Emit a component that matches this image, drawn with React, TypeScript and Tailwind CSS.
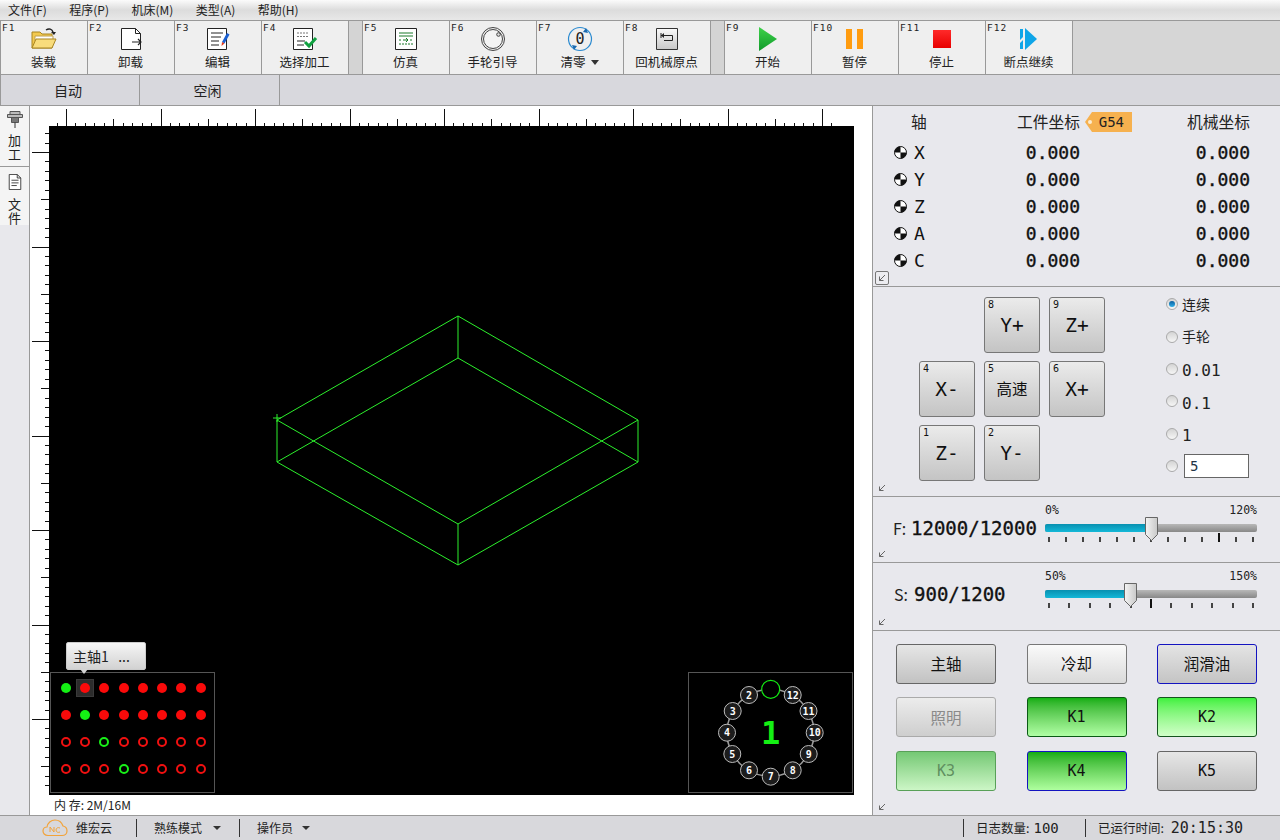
import type { ReactNode } from 'react'

const sans = "font-['Noto_Sans_CJK_SC','Liberation_Sans',sans-serif]"
const mono = "font-['DejaVu_Sans_Mono','Noto_Sans_CJK_SC',monospace]"
const heavy = '[-webkit-text-stroke:0.35px_#111]'

const menus = ['文件(F)', '程序(P)', '机床(M)', '类型(A)', '帮助(H)']

function FolderIcon() {
  return (
    <svg width="26" height="24" viewBox="0 0 26 24">
      <path d="M1 21V5h8l2 2h10v14z" fill="#f3c94f" stroke="#a88420" />
      <path d="M4 14V9h18v5z" fill="#fff" stroke="#bfa050" />
      <path d="M1 21l4-9h20l-4 9z" fill="#f8dc7c" stroke="#a88420" />
      <path d="M15 3c3-2 6-1 7 2" fill="none" stroke="#222" strokeWidth="1.5" />
      <path d="M20 5h5l-2 3z" fill="#222" />
    </svg>
  )
}

function UnloadIcon() {
  return (
    <svg width="22" height="24" viewBox="0 0 22 24" fill="none" stroke="#222">
      <path d="M1.500 1.500h14l5 5v16h-19z" fill="#fff" />
      <path d="M15.500 1.500v5h5" />
      <path d="M12 15h9M18 12l3 3-3 3" strokeWidth="1.200" />
    </svg>
  )
}

function EditIcon() {
  return (
    <svg width="24" height="24" viewBox="0 0 24 24" fill="none">
      <path d="M1.500 1.500h19v21h-19z" fill="#fff" stroke="#222" />
      <path d="M5 6h12M5 10h10M5 14h8M5 18h8" stroke="#222" />
      <path d="M16 15l5-9 2.500 1.500-5 9z" fill="#1a5fd0" />
      <path d="M16 15l2.500 1.500-3 2.500z" fill="#e43a1c" />
    </svg>
  )
}

function SelectIcon() {
  return (
    <svg width="26" height="24" viewBox="0 0 26 24" fill="none">
      <path d="M1.500 1.500h19v21h-19z" fill="#fff" stroke="#222" />
      <path d="M5 6h12M5 9.500h12" stroke="#777" strokeDasharray="2 1" />
      <path d="M5 14h8M5 18h7" stroke="#222" />
      <path d="M13 15l4 4 7-8" stroke="#10a040" strokeWidth="3" />
    </svg>
  )
}

function SimIcon() {
  return (
    <svg width="22" height="24" viewBox="0 0 22 24" fill="none">
      <path d="M.500 1.500h21v21H.500z" fill="#fff" stroke="#222" />
      <path d="M4 6h14M4 9h14" stroke="#1a7a2a" />
      <path d="M4 13h3M15 13h3M4 17h14" stroke="#1a7a2a" strokeDasharray="2 1" />
      <path d="M8 13h5M11 11l2 2-2 2" stroke="#1a7a2a" />
    </svg>
  )
}

function WheelIcon() {
  return (
    <svg width="26" height="26" viewBox="0 0 26 26" fill="none" stroke="#444">
      <circle cx="13" cy="13" r="11.500" />
      <circle cx="13" cy="13" r="9.500" fill="#f4f4f4" />
      <circle cx="18.500" cy="8.500" r="1.800" fill="#ddd" />
    </svg>
  )
}

function ZeroIcon() {
  return (
    <svg width="26" height="26" viewBox="0 0 26 26" fill="none">
      <circle cx="13" cy="13" r="11.500" stroke="#2a8ad0" strokeWidth="1.200" />
      <path d="M19 2l2 5-5-1zM7 24l-2-5 5 1z" fill="#1a6ab0" />
      <text x="13" y="18" textAnchor="middle" fontSize="15" fontFamily="DejaVu Sans Mono" fill="#222">
        0
      </text>
    </svg>
  )
}

function HomeIcon() {
  return (
    <svg width="24" height="24" viewBox="0 0 24 24" fill="none">
      <defs>
        <linearGradient id="homeFill" x1="0" y1="0" x2="0" y2="1">
          <stop offset="0" stopColor="#fafafa" />
          <stop offset="1" stopColor="#c8c8c8" />
        </linearGradient>
      </defs>
      <path d="M1.500 1.500h21v21h-21z" fill="url(#homeFill)" stroke="#333" />
      <path d="M6 6v5M6 8.500h11.500v5H9" stroke="#222" />
      <path d="M6 8.500l3-2.500v5z" fill="#222" />
    </svg>
  )
}

function PlayIcon() {
  return (
    <svg width="20" height="24" viewBox="0 0 20 24">
      <defs>
        <linearGradient id="playFill" x1="0" y1="0" x2="0" y2="1">
          <stop offset="0" stopColor="#3ed24a" />
          <stop offset="1" stopColor="#109a2a" />
        </linearGradient>
      </defs>
      <path d="M1 0l18 12L1 24z" fill="url(#playFill)" />
    </svg>
  )
}

function PauseIcon() {
  return (
    <svg width="18" height="22" viewBox="0 0 18 22">
      <rect x="0" y="1" width="6" height="20" fill="#ff9c10" />
      <rect x="11" y="1" width="6" height="20" fill="#ff9c10" />
    </svg>
  )
}

function StopIcon() {
  return (
    <svg width="18" height="18" viewBox="0 0 18 18">
      <defs>
        <linearGradient id="stopFill" x1="0" y1="0" x2="0" y2="1">
          <stop offset="0" stopColor="#ff2a2a" />
          <stop offset="1" stopColor="#e80000" />
        </linearGradient>
      </defs>
      <rect width="18" height="18" fill="url(#stopFill)" />
    </svg>
  )
}

function ResumeIcon() {
  return (
    <svg width="18" height="22" viewBox="0 0 18 22">
      <path d="M0 1h3v8l-3 3zM0 15l3-3v9H0z" fill="#0ea5e8" />
      <path d="M5 0l12 11L5 22z" fill="#0ea5e8" />
    </svg>
  )
}

const groupA = [
  { key: 'F1', label: '装载', icon: <FolderIcon /> },
  { key: 'F2', label: '卸载', icon: <UnloadIcon /> },
  { key: 'F3', label: '编辑', icon: <EditIcon /> },
  { key: 'F4', label: '选择加工', icon: <SelectIcon /> },
]
const groupB = [
  { key: 'F5', label: '仿真', icon: <SimIcon /> },
  { key: 'F6', label: '手轮引导', icon: <WheelIcon /> },
  { key: 'F7', label: '清零', icon: <ZeroIcon />, caret: true },
  { key: 'F8', label: '回机械原点', icon: <HomeIcon /> },
]
const groupC = [
  { key: 'F9', label: '开始', icon: <PlayIcon /> },
  { key: 'F10', label: '暂停', icon: <PauseIcon /> },
  { key: 'F11', label: '停止', icon: <StopIcon /> },
  { key: 'F12', label: '断点继续', icon: <ResumeIcon /> },
]

type ToolItem = { key: string; label: string; icon: ReactNode; caret?: boolean }

function ToolButton({ item }: { item: ToolItem }) {
  return (
    <div className="relative flex h-full w-[87px] shrink-0 flex-col items-center border-r border-[#999] bg-[#efefef] pr-[1px]">
      <span className={`absolute left-[1px] top-[1px] text-[9.500px] leading-[11px] tracking-[1px] text-[#222] ${mono}`}>{item.key}</span>
      <div className="flex h-[34px] items-center pt-[2px]">{item.icon}</div>
      <div className="-mt-[1px] flex h-[17px] items-center gap-[5px] text-[12.500px] text-[#222]">
        {item.label}
        {item.caret && <span className="h-0 w-0 border-x-[4px] border-t-[5px] border-x-transparent border-t-[#333]" />}
      </div>
    </div>
  )
}

function Grip() {
  return <div className="h-full w-[14px] shrink-0 border-r border-[#999] bg-[#d4d4d4]" />
}

function TopRuler() {
  const ticks = Array.from({ length: 84 }, (_, i) => i)
  return (
    <svg width="825" height="20" className="block" shapeRendering="crispEdges">
      {ticks.map((i) => {
        const x = 36 - 9.45 * 2 + 9.45 * i
        if (x > 822 || x < 19) return null
        const step = (i - 2 + 100) % 10
        const top = step === 0 ? 3 : step === 5 ? 13 : 17
        return <line key={i} x1={Math.round(x)} x2={Math.round(x)} y1={top} y2={20} stroke="#111" />
      })}
    </svg>
  )
}

function LeftRuler() {
  const ticks = Array.from({ length: 72 }, (_, i) => i)
  return (
    <svg width="19" height="669" className="block" shapeRendering="crispEdges">
      {ticks.map((i) => {
        const y = 26 - 9.45 * 2 + 9.45 * i
        if (y > 668 || y < 0) return null
        const step = (i - 2 + 100) % 10
        const left = step === 0 ? 2 : step === 5 ? 11 : 15
        return <line key={i} x1={left} x2={19} y1={Math.round(y)} y2={Math.round(y)} stroke="#111" />
      })}
    </svg>
  )
}

const ioRows = [
  { ring: false, green: 0 },
  { ring: false, green: 1 },
  { ring: true, green: 2 },
  { ring: true, green: 3 },
]

function IoPanel() {
  return (
    <div className="absolute bottom-[2px] left-[1px] h-[121px] w-[165px] border border-[#555] bg-black pl-[5px] pt-[1px]">
      <div className="grid grid-cols-[repeat(8,19.3px)] auto-rows-[27px]">
        {ioRows.map((row, r) =>
          Array.from({ length: 8 }, (_, c) => {
            const color = c === row.green ? 'green' : 'red'
            return (
              <div key={`${r}-${c}`} className="flex items-center justify-center">
                <div className={r === 0 && c === 1 ? 'flex h-[18px] w-[18px] items-center justify-center border border-[#3a3a3a] bg-[#2c2c2c]' : ''}>
                  {row.ring ? (
                    <div className={`h-[10px] w-[10px] rounded-full border-2 ${color === 'green' ? 'border-[#18f018]' : 'border-[#f01010]'}`} />
                  ) : (
                    <div className={`h-[10px] w-[10px] rounded-full ${color === 'green' ? 'bg-[#14f014]' : 'bg-[#fa0a0a]'}`} />
                  )}
                </div>
              </div>
            )
          }),
        )}
      </div>
    </div>
  )
}

const turret: [string, number, number][] = [
  ['12', 104.7, 23],
  ['11', 120.5, 39],
  ['10', 126.7, 60.7],
  ['9', 120.7, 82],
  ['8', 104.7, 98.3],
  ['7', 82.7, 104.7],
  ['6', 61, 98.3],
  ['5', 44.3, 82],
  ['4', 39, 60.7],
  ['3', 44.7, 39],
  ['2', 61, 23],
]

function TurretPanel() {
  return (
    <div className="absolute bottom-[2px] right-[1px] h-[121px] w-[165px] border border-[#555] bg-black">
      <svg width="163" height="119" className="block">
        <g transform="translate(-1 -1)">
          <circle cx="82.500" cy="60.700" r="43.500" fill="none" stroke="#999" strokeWidth="1.500" />
          {turret.map(([n, x, y]) => (
            <g key={n}>
              <circle cx={x} cy={y} r="8.500" fill="#1c1c1c" stroke="#bbb" />
              <text x={x} y={y + 3.5} textAnchor="middle" fontSize="10" fontWeight="bold" fontFamily="DejaVu Sans Mono" fill="#fff">
                {n}
              </text>
            </g>
          ))}
          <circle cx="82.700" cy="17.300" r="9" fill="#000" stroke="#14e814" strokeWidth="1.200" />
          <text x="82.700" y="72" textAnchor="middle" fontSize="32" fontWeight="bold" fontFamily="DejaVu Sans Mono" fill="#14f014">
            1
          </text>
        </g>
      </svg>
    </div>
  )
}

function Wireframe() {
  return (
    <svg width="805" height="669" className="absolute left-0 top-0" fill="none" stroke="#2cf02c" strokeWidth="1">
      <path d="M409 190L589 294L409 398L228 294Z" />
      <path d="M409 232L589 336L409 439L228 336Z" />
      <path d="M409 190V232M589 294V336M409 398V439M228 294V336" />
      <path d="M224 292H232M228 288V296" />
    </svg>
  )
}

function CornerArrow({ boxed }: { boxed?: boolean }) {
  return (
    <div
      className={`absolute bottom-[1px] left-[2px] flex h-[14px] w-[14px] items-center justify-center ${
        boxed ? 'rounded-[2px] border border-[#777] bg-[#ececf0]' : ''
      }`}
    >
      <svg width="8" height="8" viewBox="0 0 8 8" fill="none" stroke="#666">
        <path d="M7 1L1.500 6.500M1.500 2.500v4h4" />
      </svg>
    </div>
  )
}

function AxisMark() {
  return (
    <svg width="13" height="13" viewBox="0 0 13 13" className="block">
      <circle cx="6.500" cy="6.500" r="6" fill="#fff" stroke="#111" />
      <path d="M6.500 6.500V.500A6 6 0 0 0 .500 6.500zM6.500 6.500v6a6 6 0 0 0 6-6z" fill="#111" />
    </svg>
  )
}

function AxisPanel() {
  return (
    <section className="relative h-[181px] border-b border-[#999] pl-[21px]">
      <div className="mb-[1px] grid h-[32px] grid-cols-[50px_136px_170px] items-center text-[15.750px] text-[#222]">
        <span className="pl-[17px]">轴</span>
        <span className="text-right">工件坐标</span>
        <div className="flex items-center justify-between">
          <span className={`relative ml-[5px] flex h-5 w-[47px] items-center justify-end bg-[#f6b14f] pr-2 text-[14px] leading-none text-[#222] [clip-path:polygon(7px_0,100%_0,100%_100%,7px_100%,0_50%)] ${mono}`}>
            <span className="absolute left-[3px] top-[8px] h-1 w-1 rounded-full bg-[#fdeccf]" />
            G54
          </span>
          <span>机械坐标</span>
        </div>
      </div>
      {['X', 'Y', 'Z', 'A', 'C'].map((axis) => (
        <div key={axis} className={`grid h-[27px] grid-cols-[20px_30px_136px_170px] items-center text-[18px] text-[#111] ${mono}`}>
          <AxisMark />
          <span>{axis}</span>
          <span className={`text-right ${heavy}`}>0.000</span>
          <span className={`text-right ${heavy}`}>0.000</span>
        </div>
      ))}
      <CornerArrow boxed />
    </section>
  )
}

function JogKey({ n, label, cn }: { n: string; label: string; cn?: boolean }) {
  return (
    <div className="relative flex h-[56px] w-[56px] items-center justify-center rounded-[3px] border border-[#777] bg-linear-to-b from-[#ebebeb] to-[#c4c4c4] text-[#111]">
      <span className={`absolute left-[3px] top-[1px] text-[10px] leading-[12px] ${mono}`}>{n}</span>
      <span className={cn ? 'text-[15.500px]' : `mt-[1px] text-[19.500px] ${mono}`}>{label}</span>
    </div>
  )
}

function Radio({ on, children }: { on?: boolean; children?: ReactNode }) {
  return (
    <div className="flex h-[32.4px] items-center gap-[4px]">
      <span className="flex h-3 w-3 shrink-0 items-center justify-center rounded-full border border-[#aaa] bg-linear-to-b from-[#d4d4d4] to-[#f6f6f6]">
        {on && <span className="h-[6px] w-[6px] rounded-full bg-linear-to-b from-[#0a5fa0] to-[#30b0e8]" />}
      </span>
      {children}
    </div>
  )
}

function JogPanel() {
  return (
    <section className="relative flex h-[210px] border-b border-[#999] pl-[46px] pt-[10px]">
      <div className="grid h-fit grid-cols-[56px_56px_56px] gap-x-[9px] gap-y-2">
        <div />
        <JogKey n="8" label="Y+" />
        <JogKey n="9" label="Z+" />
        <JogKey n="4" label="X-" />
        <JogKey n="5" label="高速" cn />
        <JogKey n="6" label="X+" />
        <JogKey n="1" label="Z-" />
        <JogKey n="2" label="Y-" />
      </div>
      <div className="-mt-[9px] ml-[61px] text-[14px] text-[#222]">
        <Radio on>连续</Radio>
        <Radio>手轮</Radio>
        {['0.01', '0.1', '1'].map((v) => (
          <Radio key={v}>
            <span className={`mt-[5px] text-[16px] ${mono}`}>{v}</span>
          </Radio>
        ))}
        <Radio>
          <span className={`ml-[2px] flex h-6 w-[65px] items-center border border-[#666] bg-white pl-[5px] text-[14px] text-[#234] ${mono}`}>5</span>
        </Radio>
      </div>
      <CornerArrow />
    </section>
  )
}

function Slider({ low, high, value, ticks, tall }: { low: string; high: string; value: number; ticks: number; tall: number }) {
  return (
    <div className="relative w-[212px]">
      <div className={`flex h-[14px] items-center justify-between text-[11.500px] leading-none text-[#222] ${mono}`}>
        <span>{low}</span>
        <span>{high}</span>
      </div>
      <div className="mt-[6px] h-2 overflow-hidden rounded-[2px] bg-linear-to-b from-[#b8b8b8] to-[#888]">
        <div className="h-full bg-linear-to-b from-[#0890b0] to-[#14b8d8]" style={{ width: value }} />
      </div>
      <div className="mt-[1px] flex items-start justify-between px-[3px]">
        {Array.from({ length: ticks }, (_, i) => (
          <span key={i} className={i === tall ? 'h-[9px] w-[2px] bg-[#111]' : 'mt-[4px] h-[5px] w-[2px] bg-[#444]'} />
        ))}
      </div>
      <svg width="13" height="24" viewBox="0 0 13 24" className="absolute top-[13px]" style={{ left: value - 6 }}>
        <defs>
          <linearGradient id="thumbFill" x1="0" y1="0" x2="1" y2="0">
            <stop offset="0" stopColor="#f4f4f4" />
            <stop offset="1" stopColor="#c8c8c8" />
          </linearGradient>
        </defs>
        <path d="M.500.500h12v17l-6 6-6-6z" fill="url(#thumbFill)" stroke="#666" />
      </svg>
    </div>
  )
}

function RatePanel({ name, value, children, box, nameBox }: { name: string; value: string; children: ReactNode; box: string; nameBox: string }) {
  return (
    <section className={`relative flex items-start border-b border-[#999] pt-[7px] ${box}`}>
      <div className="flex flex-1 items-center pt-[10px] text-[#111]">
        <span className={`text-[16px] text-[#222] ${nameBox}`}>{name}</span>
        <span className={`text-[19px] leading-[28px] ${mono} ${heavy}`}>{value}</span>
      </div>
      <div className="mr-[23px]">{children}</div>
      <CornerArrow />
    </section>
  )
}

const ioButtons = [
  { label: '主轴', cls: 'from-[#e6e6e6] to-[#c2c2c2] border-[#666] text-[#111]' },
  { label: '冷却', cls: 'from-[#fafafa] to-[#dadada] border-[#777] text-[#111]' },
  { label: '润滑油', cls: 'from-[#e4e4e4] to-[#c4c4c4] border-[#1414c0] text-[#111]' },
  { label: '照明', cls: 'from-[#ececec] to-[#cecece] border-[#aaa] text-[#8a8a8a]' },
  { label: 'K1', cls: 'from-[#0eae0e] to-[#b0ffa4] border-[#0a5a14] text-[#111]', latin: true },
  { label: 'K2', cls: 'from-[#3cf03c] to-[#d0ffc8] border-[#14541e] text-[#111]', latin: true },
  { label: 'K3', cls: 'from-[#74c874] to-[#ccf6c6] border-[#58a058] text-[#5f8f5f]', latin: true },
  { label: 'K4', cls: 'from-[#0eae0e] to-[#aeff9e] border-[#1414c0] text-[#111]', latin: true },
  { label: 'K5', cls: 'from-[#e6e6e6] to-[#c2c2c2] border-[#666] text-[#111]', latin: true },
]

function StatusSep() {
  return <span className="h-[18px] w-px shrink-0 bg-[#333]" />
}

function StatusCaret() {
  return <span className="h-0 w-0 border-x-[4px] border-t-[4px] border-x-transparent border-t-[#333]" />
}

export default function App() {
  return (
    <div className={`flex h-[840px] w-[1280px] flex-col overflow-hidden bg-white ${sans}`}>
      {/* menu */}
      <div className="flex h-5 items-center gap-[22.500px] bg-linear-to-b from-[#fbfbfb] via-[#dcdcdc] to-[#e8e8e8] pl-2 text-[12px] text-[#222]">
        {menus.map((m) => (
          <span key={m}>{m}</span>
        ))}
      </div>

      {/* toolbar */}
      <div className="flex h-[55px] shrink-0 border-y border-l border-[#999] bg-[#d6d6d6]">
        {groupA.map((b) => (
          <ToolButton key={b.key} item={b} />
        ))}
        <Grip />
        {groupB.map((b) => (
          <ToolButton key={b.key} item={b} />
        ))}
        <Grip />
        {groupC.map((b) => (
          <ToolButton key={b.key} item={b} />
        ))}
      </div>

      {/* state row */}
      <div className="flex h-[31px] shrink-0 border-b border-l border-[#999] bg-[#d8d8dd] text-[14px] text-[#222]">
        <div className="flex w-[139px] items-center justify-center border-r border-[#999] pr-[4px]">自动</div>
        <div className="flex w-[140px] items-center justify-center border-r border-[#999] pr-[4px]">空闲</div>
      </div>

      <div className="flex min-h-0 flex-1">
        {/* side tabs */}
        <div className="flex w-[30px] shrink-0 flex-col border-r border-[#999] bg-[#e8e8ec] text-[13px] leading-[14px] text-[#222]">
          <div className="flex h-[60px] flex-col items-center bg-[#f4f4f4] pt-[5px]">
            <svg width="16" height="17" viewBox="0 0 16 17">
              <path d="M3 .500h10v3H3zM.500 3.500h15v3H.500z" fill="#bbb" stroke="#555" />
              <path d="M4.500 6.500h7v5h-7z" fill="#777" stroke="#555" />
              <path d="M8 11.500V17" stroke="#333" />
            </svg>
            <span className="mt-[5px] w-[13px] text-center">加工</span>
          </div>
          <div className="flex h-[59px] flex-col items-center border-t border-[#999] bg-[#f4f4f4] pt-[7px]">
            <svg width="16" height="18" viewBox="0 0 16 18" fill="none" stroke="#333">
              <path d="M1.500.500h9l4 4v13h-13zM10.500.500v4h4" fill="#fff" />
              <path d="M4 7h8M4 10h8M4 13h6" />
            </svg>
            <span className="mt-[7px] w-[13px] text-center">文件</span>
          </div>
        </div>

        {/* drawing area */}
        <div className="flex w-[842px] shrink-0 flex-col">
          <TopRuler />
          <div className="flex">
            <LeftRuler />
            <div className="relative h-[669px] w-[805px] bg-black">
              <Wireframe />
              <IoPanel />
              <div className="absolute bottom-[125px] left-[17px] flex h-7 w-20 items-center rounded-[2px] border border-[#ccc] bg-linear-to-b from-[#f6f6f6] to-[#d2d2d2] pl-[6px] text-[14px] text-[#222]">
                主轴1&nbsp;&nbsp;&nbsp;...
                <span className="absolute -bottom-[5px] left-[13px] h-0 w-0 border-x-[4px] border-t-[5px] border-x-transparent border-t-[#d4d4d4]" />
              </div>
              <TurretPanel />
            </div>
          </div>
          <div className="flex h-5 items-center pl-6 text-[12px] text-[#222]">内 存: 2M/16M</div>
        </div>

        {/* right panel */}
        <div className="flex flex-1 flex-col border-l border-[#999] bg-[#e8e8ed]">
          <AxisPanel />
          <JogPanel />
          <RatePanel name="F:" value="12000/12000" box="h-[66px] pl-[20px]" nameBox="w-[18px]">
            <Slider low="0%" high="120%" value={106} ticks={13} tall={10} />
          </RatePanel>
          <RatePanel name="S:" value="900/1200" box="h-[68px] pl-[21px]" nameBox="w-[20px]">
            <Slider low="50%" high="150%" value={85} ticks={11} tall={5} />
          </RatePanel>
          <section className="relative flex-1 pl-[23px] pt-[13px]">
            <div className="grid grid-cols-[100px_100px_100px] gap-x-[30.500px] gap-y-[13.400px]">
              {ioButtons.map((b) => (
                <div
                  key={b.label}
                  className={`flex h-10 items-center justify-center rounded-[3px] border bg-linear-to-b ${b.cls} ${b.latin ? `text-[15px] ${mono}` : 'text-[15.500px]'}`}
                >
                  {b.label}
                </div>
              ))}
            </div>
            <CornerArrow />
          </section>
        </div>
      </div>

      {/* status bar */}
      <div className="flex h-[25px] shrink-0 items-center border-t border-[#999] bg-[#d8d8dc] text-[12px] text-[#222]">
        <svg width="26" height="18" viewBox="0 0 26 18" fill="none" stroke="#f2a33a" strokeWidth="1.200" className="ml-[42px]">
          <path d="M6 16.500C2.500 16.500 1 14 1 12c0-2.500 2-4 4-4 .5-4 4-7 8-7s7 3 8 6c2.500 .5 4 2.500 4 5s-2 4.500-5 4.500z" />
          <path d="M8 13V8l4 5V8M18 9c-2-1-4 0-4 2s2 3 4 2" strokeWidth="1" />
        </svg>
        <span className="ml-[8px] w-[60px]">维宏云</span>
        <StatusSep />
        <span className="ml-[17px] w-[59px]">熟练模式</span>
        <StatusCaret />
        <span className="w-[18px]" />
        <StatusSep />
        <span className="ml-[17px] w-[45px]">操作员</span>
        <StatusCaret />
        <span className="flex-1" />
        <StatusSep />
        <span className="ml-[12px] w-[109px] text-[12.500px]">
          日志数量:<span className={`ml-[4px] text-[14px] ${mono}`}>100</span>
        </span>
        <StatusSep />
        <span className="ml-[12px] w-[182px] text-[12.500px]">
          已运行时间: <span className={`ml-[4px] text-[15px] ${mono}`}>20:15:30</span>
        </span>
      </div>
    </div>
  )
}
